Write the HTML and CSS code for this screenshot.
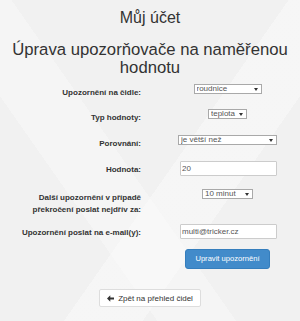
FILE: index.html
```html
<!DOCTYPE html>
<html lang="cs">
<head>
<meta charset="utf-8">
<title>Můj účet</title>
<link rel="stylesheet" href="styles.css">
</head>
<body>
<div class="page">
  <h1 class="title">Můj účet</h1>
  <h2 class="subtitle">Úprava upozorňovače na naměřenou hodnotu</h2>
  <form class="form">
    <label class="label">Upozornění na čidle:</label>
    <div class="control control--center">
      <span class="select"><select class="w-sensor"><option>roudnice</option></select></span>
    </div>

    <label class="label">Typ hodnoty:</label>
    <div class="control control--center">
      <span class="select"><select class="w-type"><option>teplota</option></select></span>
    </div>

    <label class="label">Porovnání:</label>
    <div class="control">
      <span class="select"><select class="w-compare"><option>je větší než</option></select></span>
    </div>

    <label class="label">Hodnota:</label>
    <div class="control">
      <input class="input" type="text" value="20">
    </div>

    <label class="label">Další upozornění v případě překročení poslat nejdřív za:</label>
    <div class="control control--center">
      <span class="select"><select class="w-interval"><option>10 minut</option></select></span>
    </div>

    <label class="label">Upozornění poslat na e-mail(y):</label>
    <div class="control">
      <input class="input" type="text" value="multi@tricker.cz">
    </div>

    <div class="control control--button">
      <button type="button" class="btn-primary">Upravit upozornění</button>
    </div>
  </form>
  <div class="back">
    <button type="button" class="btn-default">
      <svg class="arrow" width="7" height="7" viewBox="0 0 7 7" aria-hidden="true">
        <path d="M0 3.5 L3.3 0.3 L3.3 2.4 L7 2.4 L7 4.6 L3.3 4.6 L3.3 6.7 Z" fill="#333"/>
      </svg>
      Zpět na přehled čidel
    </button>
  </div>
</div>
</body>
</html>
```
FILE: styles.css
```css
* { box-sizing: border-box; }

html, body {
  margin: 0;
  padding: 0;
}

body {
  width: 300px;
  height: 321px;
  overflow: hidden;
  font-family: "Liberation Sans", Arial, Helvetica, sans-serif;
  color: #333;
  background-color: #f1f1f1;
  background-image:
    linear-gradient(125deg, rgba(255,255,255,0) 0 55%, rgba(255,255,255,0.35) 55% 70%, rgba(255,255,255,0) 70%),
    linear-gradient(55deg, rgba(255,255,255,0) 0 30%, rgba(255,255,255,0.3) 30% 45%, rgba(255,255,255,0) 45%);
}

.page {
  padding-top: 9px;
}

.title {
  margin: 0;
  font-size: 16px;
  line-height: 1.1;
  font-weight: normal;
  text-align: center;
  color: #333;
}

.subtitle {
  margin: 14px 0 0;
  font-size: 16.7px;
  line-height: 1.1;
  font-weight: normal;
  text-align: center;
  color: #333;
}

.form {
  margin-top: 7px;
  padding-left: 15px;
  display: grid;
  grid-template-columns: 126px 99px;
  grid-template-rows: 25px 26px 26px 28px 35px 25px auto;
  column-gap: 37px;
  align-items: start;
}

.label {
  font-size: 8px;
  font-weight: bold;
  line-height: 12px;
  padding-top: 3px;
  text-align: right;
  color: #333;
}

.control {
  display: flex;
  justify-content: flex-start;
}

.control--center {
  justify-content: center;
}

.control--button {
  grid-column: 2;
  justify-content: center;
}

.select {
  position: relative;
  display: inline-block;
}

.select::after {
  content: "";
  position: absolute;
  right: 4px;
  top: 4px;
  border-left: 2px solid transparent;
  border-right: 2px solid transparent;
  border-top: 3px solid #333;
  pointer-events: none;
}

.select select {
  -webkit-appearance: none;
  appearance: none;
  display: block;
  height: 10px;
  margin: 0;
  padding: 0 10px 0 2px;
  border: 1px solid #a9a9a9;
  border-radius: 0;
  background: #fff;
  color: #555;
  font-family: "Liberation Sans", Arial, sans-serif;
  font-size: 8px;
  line-height: 8px;
}

.w-sensor { width: 68px; }
.w-type { width: 39px; }
.w-compare { width: 99px; }
.w-interval { width: 51px; }

.input {
  display: block;
  width: 97px;
  height: 15px;
  margin: 0 0 0 2px;
  padding: 0 1px;
  border: 1px solid #ccc;
  border-radius: 1px;
  background: #fff;
  color: #555;
  font-family: "Liberation Sans", Arial, sans-serif;
  font-size: 8px;
}

.btn-primary {
  height: 20px;
  padding: 0 9px;
  border: 1px solid #357ebd;
  border-radius: 3px;
  background: #428bca;
  color: #fff;
  font-family: "Liberation Sans", Arial, sans-serif;
  font-size: 7.6px;
  line-height: 18px;
}

.back {
  margin-top: 20px;
  display: flex;
  justify-content: center;
}

.btn-default {
  display: inline-flex;
  align-items: center;
  gap: 4px;
  height: 18px;
  padding: 0 7px;
  border: 1px solid #ddd;
  border-radius: 2px;
  background: #fff;
  color: #333;
  font-family: "Liberation Sans", Arial, sans-serif;
  font-size: 8px;
}

.arrow {
  display: block;
}
```
